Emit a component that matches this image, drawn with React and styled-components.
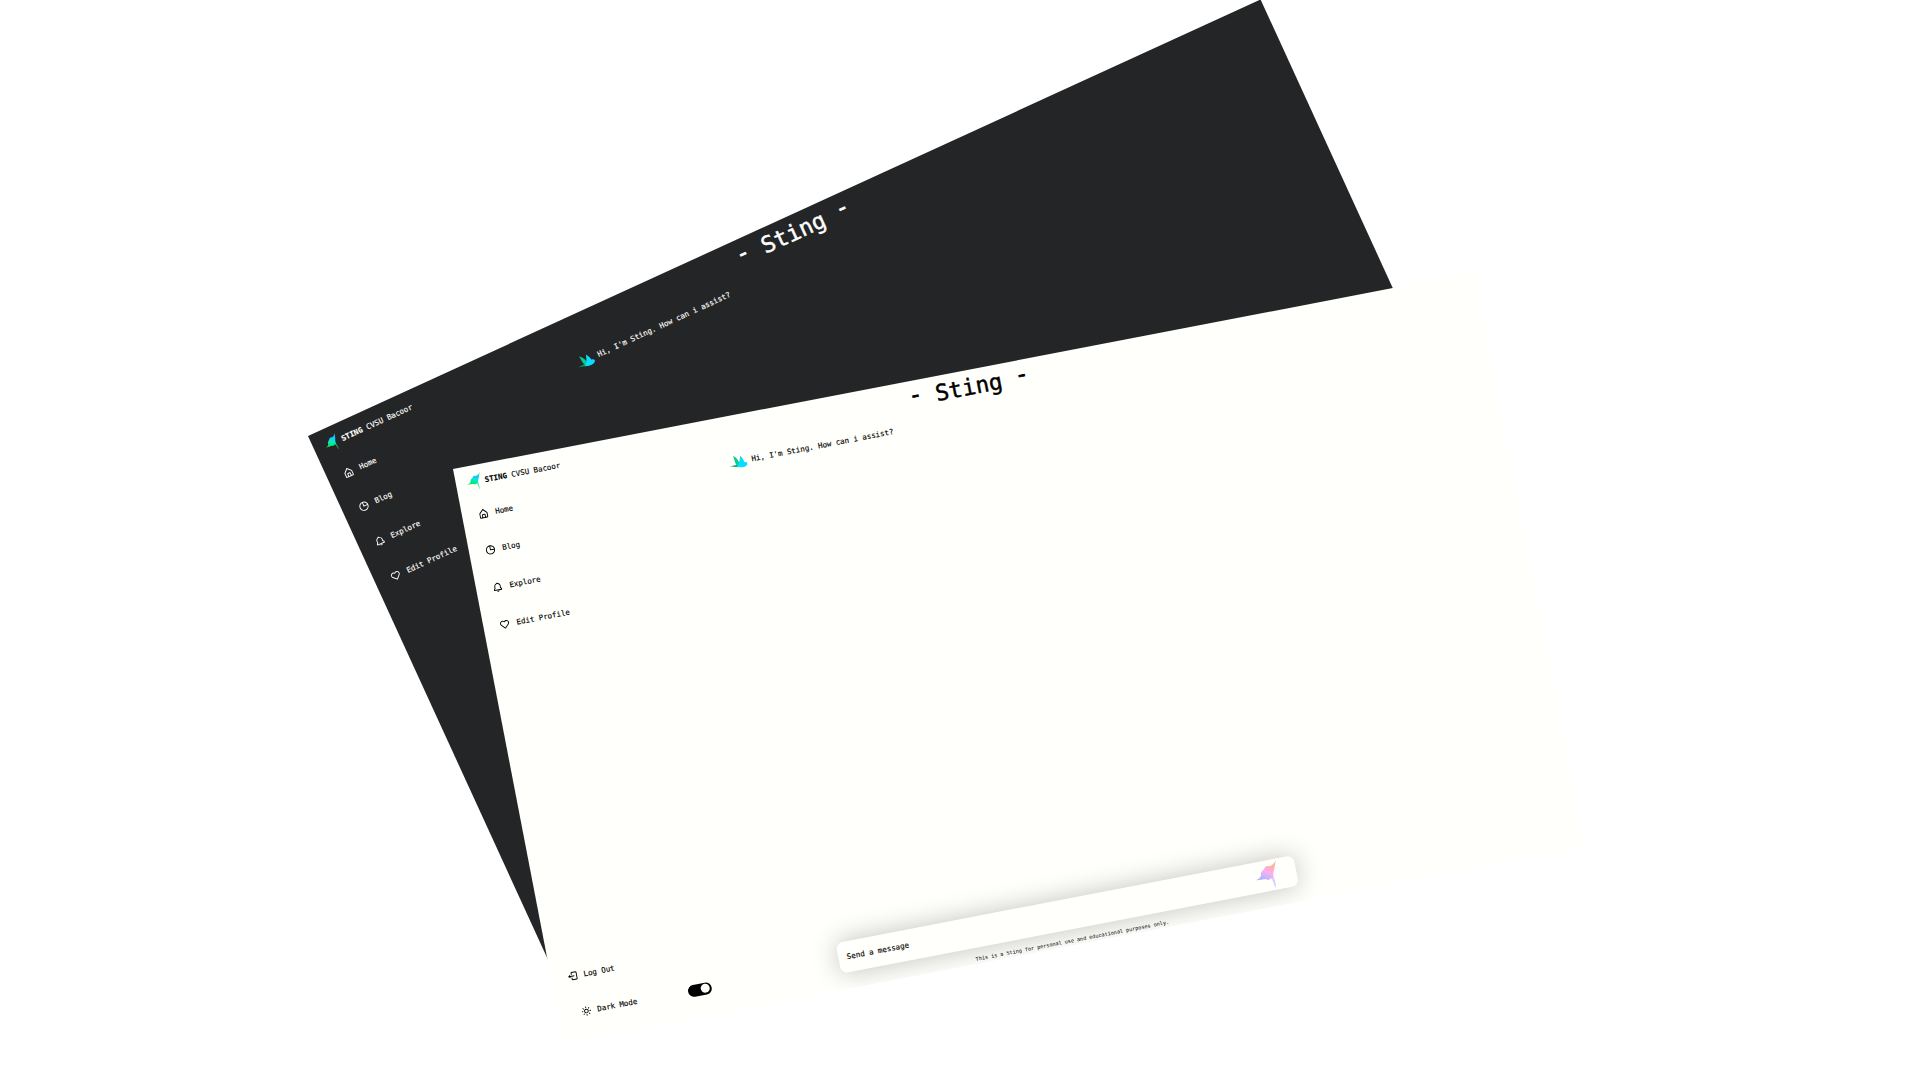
import React, { useId } from "react";
import styled, { createGlobalStyle } from "styled-components";
import { BiHomeAlt, BiPieChartAlt, BiBell, BiHeart, BiLogOut, BiSun } from "react-icons/bi";

const GlobalStyle = createGlobalStyle`
  * { box-sizing: border-box; }
  body { margin: 0; background: #fff; overflow: hidden; }
`;

const Stage = styled.main`
  position: relative;
  width: 1920px;
  height: 1080px;
  overflow: hidden;
  background: #fff;
`;

const Panel = styled.section`
  position: absolute;
  left: ${(p) => p.$x}px;
  top: ${(p) => p.$y}px;
  width: 1039.5px;
  height: 584.5px;
  transform-origin: 0 0;
  transform: rotate(${(p) => p.$angle}deg) scale(${(p) => p.$scale});
  display: grid;
  grid-template-columns: 160px 474px;
  column-gap: 122px;
  overflow: hidden;
  background: ${(p) => (p.$dark ? "#242526" : "#fffffb")};
  color: ${(p) => (p.$dark ? "#fff" : "#000")};
  font-family: "DejaVu Sans Mono", "Liberation Mono", monospace;
  font-size: 7.5px;
  line-height: 10px;
  white-space: pre;
  -webkit-text-stroke: 0.12px currentColor;
`;

const Sidebar = styled.nav`
  display: flex;
  flex-direction: column;
  height: 584.5px;
`;

const Brand = styled.header`
  display: flex;
  align-items: center;
  height: 31px;
  padding-left: 9px;
  gap: 1.2px;

  & > span { padding-top: 2.6px; }
`;

const Menu = styled.div`
  display: flex;
  flex-direction: column;
  margin-top: ${(p) => p.$top};
`;

const Item = styled.div`
  display: flex;
  align-items: center;
  height: 37.6px;
  padding-left: ${(p) => p.$indent || 16.2}px;
  gap: ${(p) => p.$gap || 6.3}px;

  & > svg { width: 11px; height: 11px; flex: none; }
`;

const Label = styled.span`
  padding-top: 1px;
`;

const Switch = styled.span`
  display: flex;
  justify-content: flex-end;
  align-items: center;
  flex: none;
  width: 24px;
  height: 12.4px;
  margin-left: 46.6px;
  padding-right: 1.8px;
  border-radius: 6.2px;
  background: #000;

  &::after {
    content: "";
    width: 8.8px;
    height: 8.8px;
    border-radius: 50%;
    background: #fffffb;
  }
`;

const Chat = styled.div`
  display: flex;
  flex-direction: column;
  height: 584.5px;
`;

const Title = styled.h1`
  display: flex;
  justify-content: center;
  gap: 13.5px;
  margin: 0;
  padding: 3.6px 0 0 6px;
  height: 38px;
  font-size: 22.5px;
  line-height: 27px;
  font-weight: 400;
  -webkit-text-stroke: 0.45px currentColor;
`;

const Dash = styled.span`
  margin-top: -2.2px;
  -webkit-text-stroke-width: 0.8px;
`;

const Message = styled.div`
  display: flex;
  align-items: center;
  height: 18px;
  margin-left: -9.8px;
  gap: 2.8px;
`;

const Composer = styled.div`
  display: flex;
  align-items: center;
  justify-content: space-between;
  height: 31.7px;
  margin: auto 4px 0;
  padding: 0 14px 0 8.5px;
  border-radius: 7px;
  background: #fffffb;
  box-shadow: 0 0 27px rgba(0, 0, 0, 0.25);

  & > span { padding-top: 1px; }
  & > svg { margin-bottom: 4px; }
`;

const Note = styled.footer`
  height: 15.3px;
  padding-top: 6.3px;
  text-align: center;
  font-size: 5.2px;
  line-height: 9px;
  -webkit-text-stroke-width: 0;
`;

function Ray({ size, colors }) {
  const id = useId();
  return (
    <svg width={size} height={size} viewBox="-32 -32 64 64">
      <defs>
        <linearGradient id={id} gradientUnits="userSpaceOnUse" x1="10" y1="-24" x2="-5" y2="14">
          <stop offset="0.15" stopColor={colors[0]} />
          <stop offset="0.55" stopColor={colors[1]} />
          <stop offset="0.95" stopColor={colors[2]} />
        </linearGradient>
      </defs>
      <g transform="rotate(10.9)" fill={`url(#${id})`}>
        <path d="M19-29C17-20 16-16 16-11C14-6 13-1 14 8C10 8 6 10 4 13C-1 9-9 12-22 13C-14 9-11 6-12-1C-11-6-7-7-5-11C-3-17 2-17 6-16C12-18 16-23 19-29Z" />
        <path d="M7 8C13 12 15 20 18 30C20 22 17 13 14 6Z" opacity="0.65" />
      </g>
    </svg>
  );
}

function Bird() {
  return (
    <svg width="20" height="20" viewBox="-30 -30 60 60">
      <g transform="rotate(10.9)">
        <path d="M-28 13C-18 12-12 11-4 8L-2 16C-10 15-18 14-28 13Z" fill="#079b68" />
        <path d="M-17-18C-8-12-1-6 4 8L-4 13C-12 6-13-6-17-18Z" fill="#08cc8d" />
        <path d="M4-18C11-12 14-5 17 1C21 0 24 2 26 4C26 14 12 19-8 15C-1 10 2 3 4-18Z" fill="#08dcff" />
      </g>
    </svg>
  );
}

const OCEAN = ["#12c4ff", "#08e6d8", "#08e848"];
const SUNSET = ["#ffb09c", "#f9b0f4", "#aeb4ff"];

function Screen({ dark, ...place }) {
  return (
    <Panel $dark={dark} $x={place.x} $y={place.y} $angle={place.angle} $scale={place.scale}>
      <Sidebar>
        <Brand>
          <Ray size={19} colors={OCEAN} />
          <span><b>STING</b> CVSU Bacoor</span>
        </Brand>
        <Menu $top="-0.5px">
          <Item><BiHomeAlt /><Label>Home</Label></Item>
          <Item><BiPieChartAlt /><Label>Blog</Label></Item>
          <Item><BiBell /><Label>Explore</Label></Item>
          <Item><BiHeart /><Label>Edit Profile</Label></Item>
        </Menu>
        <Menu $top="auto">
          <Item $gap={5.5}><BiLogOut /><Label>Log Out</Label></Item>
          <Item $indent={23.4} $gap={5.2}><BiSun /><Label>Dark Mode</Label><Switch /></Item>
        </Menu>
        <Menu $top="8px" />
      </Sidebar>
      <Chat>
        <Title><Dash>-</Dash><span>Sting</span><Dash>-</Dash></Title>
        <Message><Bird /><span>Hi, I'm Sting. How can i assist?</span></Message>
        <Composer>
          <span>Send a message</span>
          <Ray size={31} colors={SUNSET} />
        </Composer>
        <Note>This is a Sting for personal use and educational purposes only.</Note>
      </Chat>
    </Panel>
  );
}

export default function App() {
  return (
    <>
      <GlobalStyle />
      <Stage>
        <Screen dark x={308.3} y={436.4} angle={-24.62} scale={1.0075} />
        <Screen x={453.2} y={469} angle={-10.9} scale={1} />
      </Stage>
    </>
  );
}
